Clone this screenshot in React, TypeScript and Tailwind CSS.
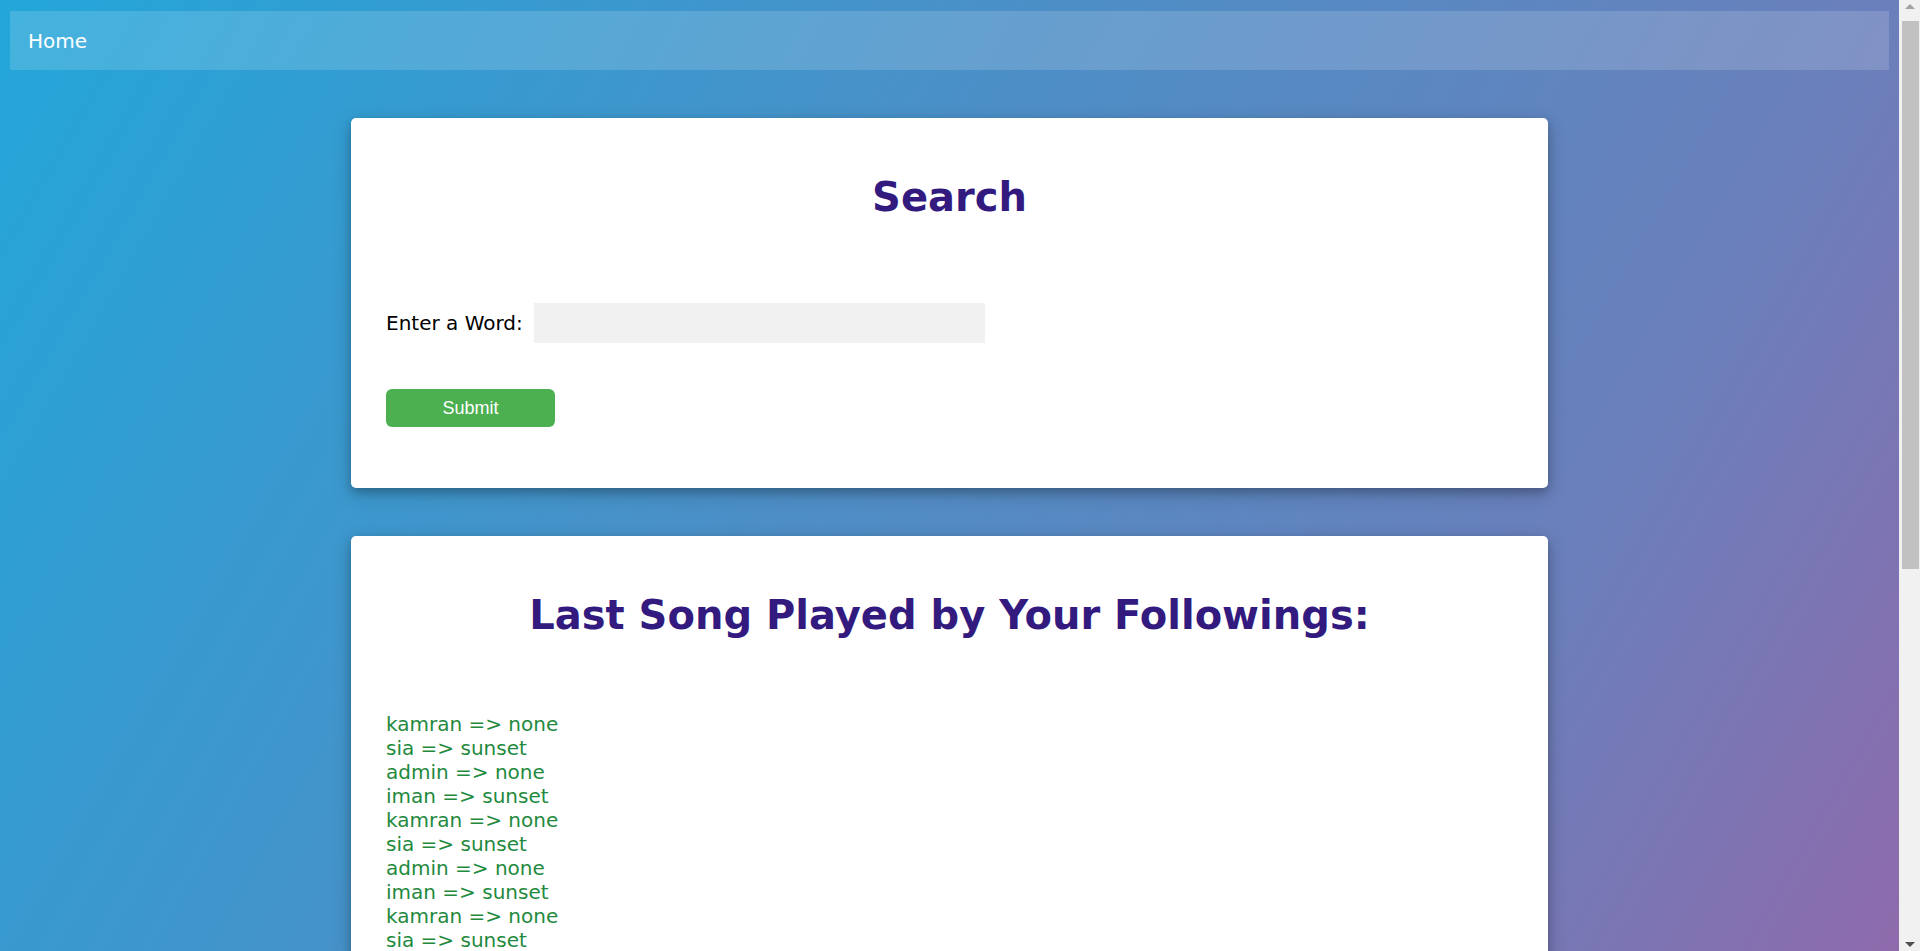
import React from 'react'

interface Play {
  user: string
  song: string
}

const basePlays: Play[] = [
  { user: 'kamran', song: 'none' },
  { user: 'sia', song: 'sunset' },
  { user: 'admin', song: 'none' },
  { user: 'iman', song: 'sunset' }
]

const plays: Play[] = Array.from({ length: 8 }).flatMap(() => basePlays)

const Card = ({ children }: { children: React.ReactNode }) => (
  <div className="mx-auto mt-12 w-[1197px] rounded-[5px] bg-white px-[35px] pt-[55px] pb-[61px] shadow-[0_4px_8px_0_rgba(0,0,0,0.2),0_6px_20px_0_rgba(0,0,0,0.19)]">
    {children}
  </div>
)

const Title = ({ children }: { children: React.ReactNode }) => (
  <h1 className="text-center text-[40px] font-bold leading-[48px] text-[#321a7f]">
    {children}
  </h1>
)

// barra de rolagem clássica, como no navegador da captura
const ScrollTrack = () => (
  <div className="flex w-[21px] shrink-0 flex-col items-center bg-[#f1f1f1]">
    <div className="mt-[4px] h-0 w-0 border-x-[5px] border-b-[5px] border-x-transparent border-b-[#a3a3a3]" />
    <div className="mt-[12px] ml-[1px] h-[548px] w-[17px] bg-[#c1c1c1]" />
    <div className="mt-auto mb-[4px] h-0 w-0 border-x-[5px] border-t-[5px] border-x-transparent border-t-[#505050]" />
  </div>
)

export default function App() {
  return (
    <div className="flex h-screen font-['DejaVu_Sans',Verdana,sans-serif] text-[20px] text-black">
      <div className="flex-1 overflow-y-auto bg-[linear-gradient(120deg,#23a6d9_0%,#4e8ec6_45%,#6b7fbb_78%,#8e6aab_100%)] [scrollbar-width:none]">
        <div className="px-[10px] pt-[11px] pb-12">
          {/* Barra de navegação */}
          <nav className="flex h-[59px] items-center bg-white/15 px-[18px]">
            <a href="#" className="text-[20px] text-white">
              Home
            </a>
          </nav>

          {/* Busca */}
          <Card>
            <Title>Search</Title>
            <form className="mt-[82px]" onSubmit={(e) => e.preventDefault()}>
              <div className="flex items-center">
                <label htmlFor="word" className="leading-6">
                  Enter a Word:
                </label>
                <input
                  id="word"
                  type="text"
                  className="ml-[11px] h-[40px] w-[451px] bg-[#f1f1f1] px-3 outline-none"
                />
              </div>
              <button
                type="submit"
                className="mt-[46px] h-[38px] w-[169px] rounded-[6px] bg-[#4caf50] font-['Liberation_Sans',Arial,sans-serif] text-[18px] text-white"
              >
                Submit
              </button>
            </form>
          </Card>

          {/* Últimas músicas */}
          <Card>
            <Title>Last Song Played by Your Followings:</Title>
            <div className="mt-[73px] text-[#1f8a3e]">
              {plays.map((p, i) => (
                <div key={i} className="leading-6">
                  {p.user} =&gt; {p.song}
                </div>
              ))}
            </div>
          </Card>
        </div>
      </div>
      <ScrollTrack />
    </div>
  )
}
